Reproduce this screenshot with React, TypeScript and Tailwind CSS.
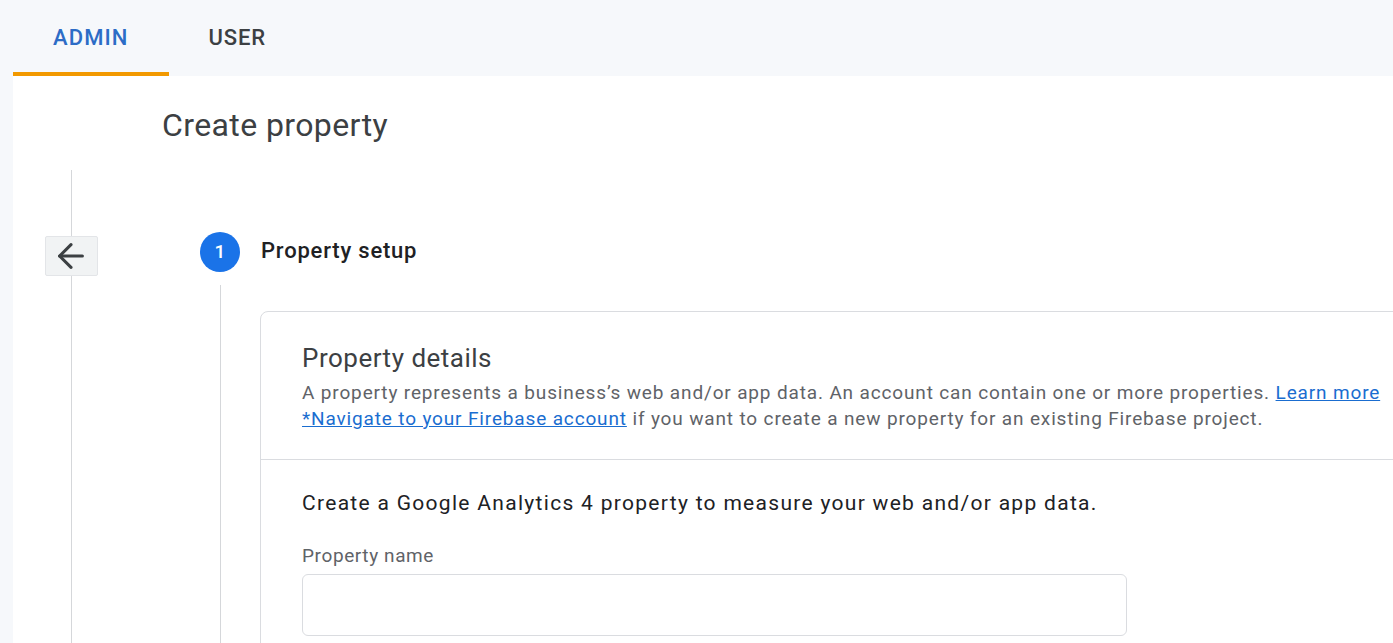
import React from 'react'

const font = { fontFamily: 'Roboto, "Open Sans", Arial, sans-serif' }

function BackArrow() {
  return (
    <svg width="26" height="26" viewBox="4 4 16 16" fill="none" stroke="#3c4043" strokeWidth="1.9" strokeLinecap="round" strokeLinejoin="round">
      <path d="M19 12H5" />
      <path d="M12 19l-7-7 7-7" />
    </svg>
  )
}

export default function App() {
  return (
    <div className="w-[1393px] h-[643px] overflow-hidden bg-[#f6f8fb] flex flex-col" style={font}>
      {/* Tabs */}
      <div className="h-[76px] shrink-0 flex pl-[13px]">
        <div className="px-10 flex items-center border-b-[4px] border-[#f29900] pt-[2px]">
          <span className="text-[22px] font-medium tracking-[0.05em] text-[#2c6cc6]">ADMIN</span>
        </div>
        <div className="px-10 flex items-center border-b-[4px] border-transparent pt-[2px]">
          <span className="text-[22px] font-medium tracking-[0.04em] text-[#3c4043]">USER</span>
        </div>
      </div>

      {/* Content */}
      <div className="flex-1 ml-[13px] bg-white flex flex-col min-h-0">
        <div className="pl-[149px] pt-[31px] text-[32px] leading-[36px] tracking-[0.4px] text-[#3c4043]">Create property</div>

        <div className="flex flex-1 min-h-0">
          {/* Back gutter */}
          <div className="w-[116px] shrink-0 flex flex-col items-center pt-[27px]">
            <div className="w-px h-[66px] bg-[#d5d7da]" />
            <button className="w-[53px] h-[40px] shrink-0 flex items-center justify-center bg-[#f1f3f4] border border-[#e3e5e8] rounded-[2px]">
              <BackArrow />
            </button>
            <div className="w-px flex-1 bg-[#d5d7da]" />
          </div>

          {/* Stepper */}
          <div className="ml-[71px] flex-1 flex flex-col pt-[89px] min-h-0">
            <div className="flex items-center gap-[21px]">
              <div className="w-10 h-10 rounded-full bg-[#1a73e8] flex items-center justify-center text-white text-[19px] font-medium">1</div>
              <div className="text-[22px] leading-[28px] pb-[2px] font-medium tracking-[0.8px] text-[#202124]">Property setup</div>
            </div>

            <div className="flex flex-1 min-h-0">
              <div className="w-10 shrink-0 flex justify-center pt-[13px]">
                <div className="w-px h-full bg-[#d5d7da]" />
              </div>
              <div className="self-start ml-5 mt-[39px] w-[1200px] shrink-0 border border-[#dadce0] rounded-[8px]">
                <div className="pl-[41px] pt-[31px] pb-[27px] border-b border-[#dadce0]">
                  <div className="text-[26px] leading-[30px] tracking-[0.5px] text-[#3c4043]">Property details</div>
                  <div className="mt-[7px] text-[19px] leading-[26px] tracking-[0.85px] text-[#5f6368]">
                    A property represents a business’s web and/or app data. An account can contain one or more properties.{' '}
                    <a className="text-[#1a6dd0] underline">Learn more</a>
                    <br />
                    <a className="text-[#1a6dd0] underline">*Navigate to your Firebase account</a> if you want to create a new property for an existing Firebase project.
                  </div>
                </div>
                <div className="pl-[41px] pt-[29px] pb-10">
                  <div className="text-[21px] leading-[28px] tracking-[1.3px] text-[#202124]">Create a Google Analytics 4 property to measure your web and/or app data.</div>
                  <div className="mt-[27px] text-[19px] leading-[24px] tracking-[0.6px] text-[#5f6368]">Property name</div>
                  <div className="mt-[6px] w-[825px] h-[62px] border border-[#dadce0] rounded-[6px]" />
                </div>
              </div>
            </div>
          </div>
        </div>
      </div>
    </div>
  )
}
